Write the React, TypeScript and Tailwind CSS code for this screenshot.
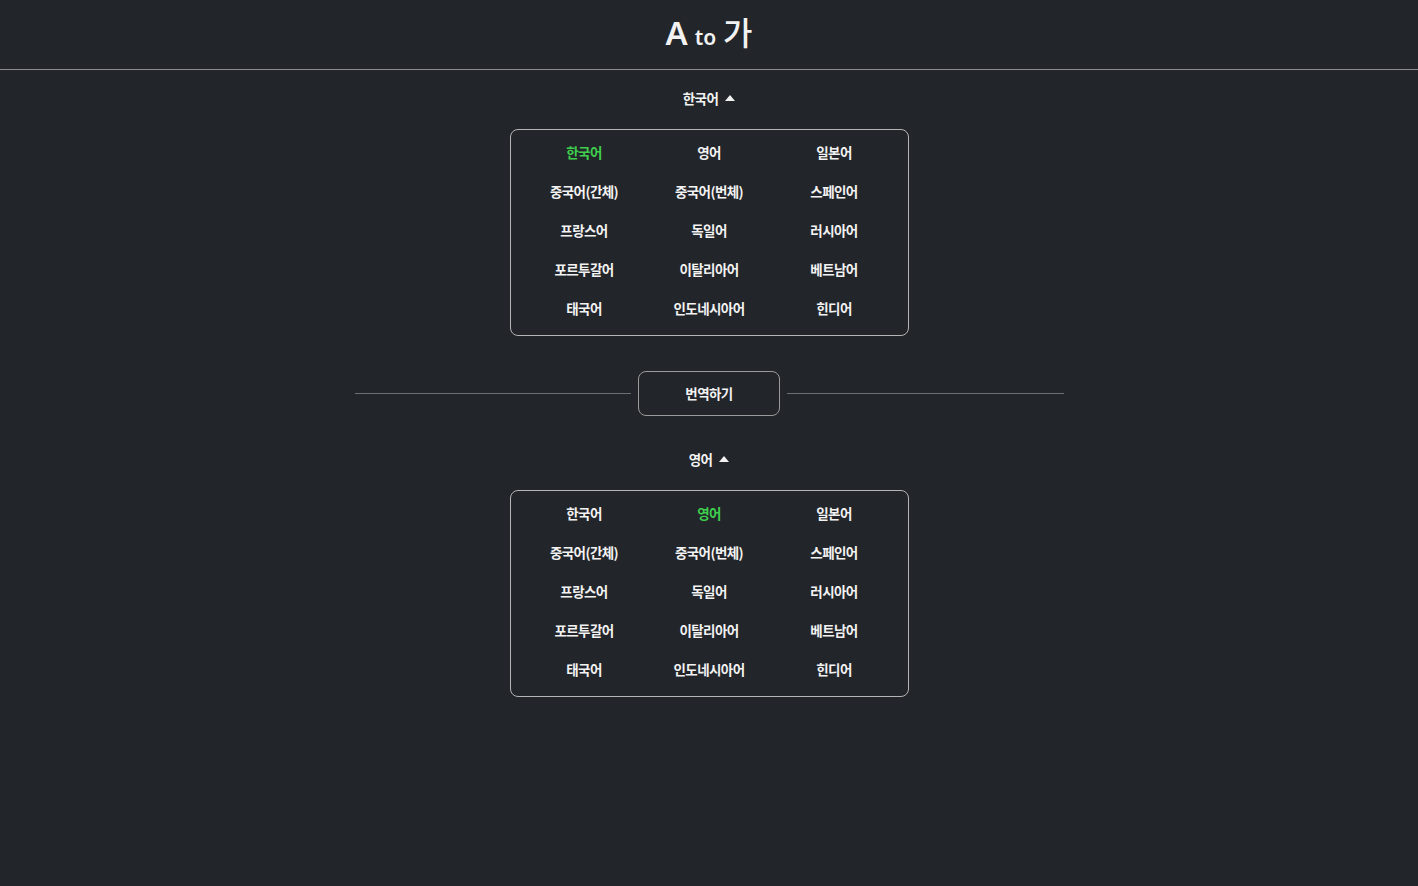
const languages = [
  '한국어', '영어', '일본어',
  '중국어(간체)', '중국어(번체)', '스페인어',
  '프랑스어', '독일어', '러시아어',
  '포르투갈어', '이탈리아어', '베트남어',
  '태국어', '인도네시아어', '힌디어',
];

const font = { fontFamily: '"Noto Sans CJK KR", "Noto Sans", sans-serif' };

function Caret() {
  return (
    <svg width="10" height="6" viewBox="0 0 10 6" className="ml-[7px]">
      <path d="M0 6 L5 0 L10 6 Z" fill="#f2f2f2" />
    </svg>
  );
}

function LanguagePicker({ selected }: { selected: string }) {
  return (
    <div className="flex flex-col items-center">
      <button className="flex h-[20px] items-center text-[13.5px] font-bold tracking-[-0.6px] text-[#f2f2f2]">
        {selected}
        <Caret />
      </button>
      <div className="mt-[21px] grid w-[399px] grid-cols-3 rounded-[8px] border border-[#b5b5b5] px-[11px] pt-[3px] pb-[7px]">
        {languages.map((lang) => (
          <div
            key={lang}
            className={`flex h-[39px] items-center justify-center text-[13.5px] font-bold tracking-[-0.6px] ${
              lang === selected ? 'text-[#3fcf4e]' : 'text-[#f2f2f2]'
            }`}
          >
            {lang}
          </div>
        ))}
      </div>
    </div>
  );
}

export default function App() {
  return (
    <div className="min-h-[886px] w-full bg-[#222529] text-[#f2f2f2]" style={font}>
      <header className="flex h-[70px] items-center justify-center border-b border-[#8c8c8c] pb-[6px]">
        <h1 className="flex items-baseline gap-[7px] font-semibold leading-none" style={{ fontFamily: '"Noto Sans", "Noto Sans CJK KR", sans-serif' }}>
          <span className="text-[33px]">A</span>
          <span className="text-[21px]">to</span>
          <span className="text-[32px] font-medium" style={font}>가</span>
        </h1>
      </header>

      <div className="mt-[18px]">
        <LanguagePicker selected="한국어" />
      </div>

      <div className="mx-auto mt-[35px] flex w-[709px] items-center gap-[7px]">
        <div className="h-[1px] flex-1 bg-[#6d6f72]" />
        <button className="flex h-[45px] w-[142px] items-center justify-center rounded-[8px] border border-[#9a9a9a] text-[13.5px] font-bold tracking-[-0.6px] text-[#f2f2f2]">
          번역하기
        </button>
        <div className="h-[1px] flex-1 bg-[#6d6f72]" />
      </div>

      <div className="mt-[33px]">
        <LanguagePicker selected="영어" />
      </div>
    </div>
  );
}
